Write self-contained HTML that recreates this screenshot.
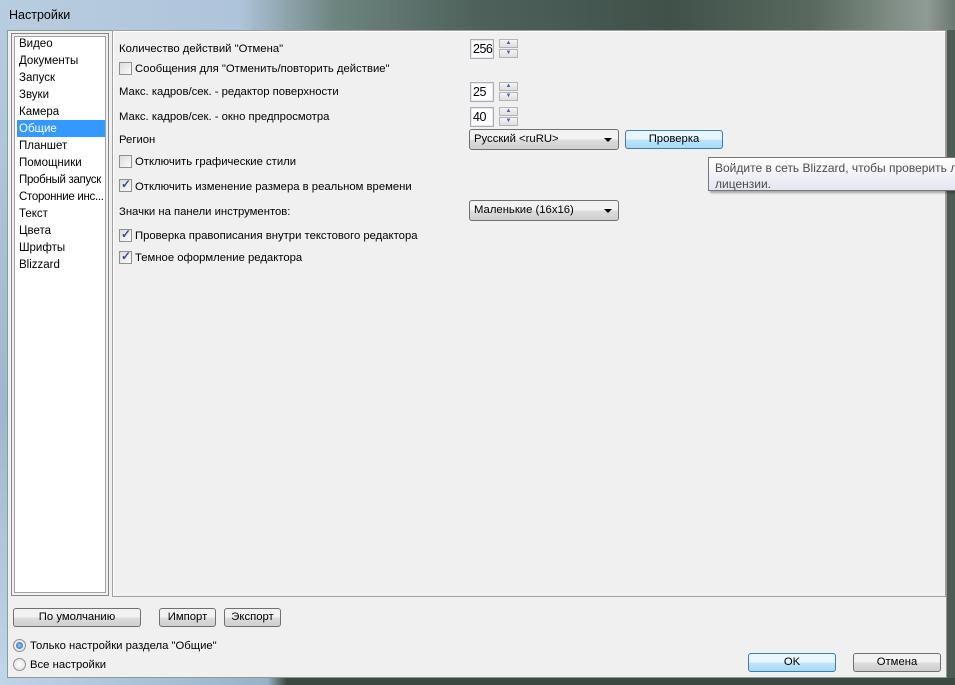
<!DOCTYPE html>
<html><head><meta charset="utf-8"><style>
*{box-sizing:border-box;margin:0;padding:0}
body{width:955px;height:685px;overflow:hidden;font-family:"Liberation Sans",sans-serif;font-size:11px;color:#000;background:#4a5a55;position:relative}
.a{position:absolute}
#title{left:0;top:0;width:955px;height:31px;background:linear-gradient(90deg,#b9cde0 0%,#aec4da 25%,#6e8580 35%,#4e615b 50%,#3f5149 70%,#59695f 85%,#8f9c95 97%,#6b7770 100%)}
#title span{position:absolute;left:9px;top:8px;font-size:12.5px;color:#000}
#lb{left:0;top:0;width:7px;height:685px;background:linear-gradient(180deg,#b9cde0,#9fb6cc 60%,#c2d6ea)}
#rb{left:947px;top:30px;width:8px;height:655px;background:#4e5c56}
#bb{left:0;top:678px;width:955px;height:7px;background:linear-gradient(90deg,#c0d4e8,#9ab2c8 28%,#3c4942 30%,#3c4942)}
#client{left:7px;top:30px;width:940px;height:648px;background:#f0f0f0;border:1px solid #8a9a94}
#list{left:11px;top:33px;width:98px;height:563px;background:#fff;border:1px solid #828790;box-shadow:inset 0 0 0 2px #f0f0f0,inset 0 0 0 3px #a0a0a0}
.it{position:absolute;left:19px;font-size:11.5px;line-height:17px;white-space:nowrap}
#sel{left:17px;top:120px;width:88px;height:17px;background:#3399ff}
#panel{left:112px;top:30px;width:834px;height:567px;border:1px solid #a0a0a0;box-shadow:inset 1px 1px 0 #fff}
.lbl{position:absolute;left:119px;line-height:14px;font-size:11.3px;white-space:nowrap}
.cb{position:absolute;width:13px;height:13px;border:1px solid #8e8f8f;background:linear-gradient(135deg,#dcdcdc,#fbfbfb)}
.cb.c::after{content:"✓";position:absolute;left:1px;top:-3px;font-size:12px;color:#3b4d87;font-weight:bold}
.num{position:absolute;left:470px;width:24px;height:20px;background:#fff;border:1px solid #abadb3;font-size:12.5px;padding:2px 0 0 2px;box-shadow:inset 0 0 0 1px #e3e9ef;letter-spacing:-0.5px}
.sp{position:absolute;left:499px;width:19px;height:9px;border:1px solid #b4b4b4;background:linear-gradient(#f4f4f4,#dedede);font-size:6px;color:#4c60a8;text-align:center;line-height:7px}
.dd{position:absolute;left:469px;width:150px;height:21px;border:1px solid #707070;border-radius:3px;background:linear-gradient(#f2f2f2 50%,#dddddd 50%,#cfcfcf);padding:3px 0 0 4px;font-size:11.3px}
.dd::after{content:"";position:absolute;right:6px;top:8px;border:4px solid transparent;border-top:4px solid #000;border-bottom:0}
.btn{position:absolute;height:19px;border:1px solid #707070;border-radius:3px;background:linear-gradient(#f2f2f2 50%,#dddddd 50%,#cfcfcf);text-align:center;line-height:17px;font-size:11.3px}
.btn.h{border-color:#3c7fb1;background:linear-gradient(#eaf6fd 50%,#bee6fd 50%,#a7d9f5)}
#tip{left:708px;top:157px;width:260px;height:34px;border:1px solid #767676;background:linear-gradient(#fff,#e4e5f0);box-shadow:2px 2px 2px rgba(0,0,0,.3);padding:2px 0 0 6px;line-height:16px;color:#4c4c4c;white-space:nowrap;font-size:12px}
.rad{position:absolute;width:13px;height:13px;border-radius:50%;border:1px solid #8e8f8f;background:radial-gradient(#fff,#dcdcdc)}
.rad.on::after{content:"";position:absolute;left:2px;top:2px;width:7px;height:7px;border-radius:50%;background:radial-gradient(#8bd2f5,#1e5e9a)}
</style></head><body>
<div id="title" class="a"><span>Настройки</span></div>
<div id="lb" class="a"></div>
<div id="rb" class="a"></div>
<div id="bb" class="a"></div>
<div id="client" class="a"></div>
<div id="list" class="a"></div>
<div id="sel" class="a"></div>
<div class="it" style="top:36px">Видео</div>
<div class="it" style="top:53px">Документы</div>
<div class="it" style="top:70px">Запуск</div>
<div class="it" style="top:87px">Звуки</div>
<div class="it" style="top:104px">Камера</div>
<div class="it" style="top:121px;color:#fff">Общие</div>
<div class="it" style="top:138px">Планшет</div>
<div class="it" style="top:155px">Помощники</div>
<div class="it" style="top:172px;letter-spacing:-0.3px">Пробный запуск</div>
<div class="it" style="top:189px;letter-spacing:-0.3px">Сторонние инс...</div>
<div class="it" style="top:206px">Текст</div>
<div class="it" style="top:223px">Цвета</div>
<div class="it" style="top:240px">Шрифты</div>
<div class="it" style="top:257px">Blizzard</div>
<div id="panel" class="a"></div>

<div class="lbl" style="top:42px">Количество действий "Отмена"</div>
<div class="num" style="top:39px">256</div>
<div class="sp" style="top:39px">▲</div><div class="sp" style="top:49px">▼</div>

<div class="cb" style="left:119px;top:62px"></div><div class="lbl" style="left:135px;top:62px">Сообщения для "Отменить/повторить действие"</div>

<div class="lbl" style="top:85px">Макс. кадров/сек. - редактор поверхности</div>
<div class="num" style="top:82px">25</div>
<div class="sp" style="top:82px">▲</div><div class="sp" style="top:92px">▼</div>

<div class="lbl" style="top:110px">Макс. кадров/сек. - окно предпросмотра</div>
<div class="num" style="top:107px">40</div>
<div class="sp" style="top:107px">▲</div><div class="sp" style="top:117px">▼</div>

<div class="lbl" style="top:133px">Регион</div>
<div class="dd" style="top:129px">Русский &lt;ruRU&gt;</div>
<div class="btn h" style="left:625px;top:130px;width:98px">Проверка</div>

<div class="cb" style="left:119px;top:155px"></div><div class="lbl" style="left:135px;top:155px">Отключить графические стили</div>
<div class="cb c" style="left:119px;top:179px"></div><div class="lbl" style="left:135px;top:180px">Отключить изменение размера в реальном времени</div>
<div class="lbl" style="top:205px">Значки на панели инструментов:</div>
<div class="dd" style="top:200px">Маленькие (16x16)</div>
<div class="cb c" style="left:119px;top:229px"></div><div class="lbl" style="left:135px;top:229px">Проверка правописания внутри текстового редактора</div>
<div class="cb c" style="left:119px;top:251px"></div><div class="lbl" style="left:135px;top:251px">Темное оформление редактора</div>

<div id="tip" class="a">Войдите в сеть Blizzard, чтобы проверить ло<br>лицензии.</div>

<div class="btn" style="left:13px;top:608px;width:128px">По умолчанию</div>
<div class="btn" style="left:159px;top:608px;width:57px">Импорт</div>
<div class="btn" style="left:224px;top:608px;width:57px">Экспорт</div>
<div class="rad on" style="left:13px;top:639px"></div><div class="lbl" style="left:30px;top:639px">Только настройки раздела "Общие"</div>
<div class="rad" style="left:13px;top:658px"></div><div class="lbl" style="left:30px;top:658px">Все настройки</div>
<div class="btn h" style="left:748px;top:653px;width:88px">OK</div>
<div class="btn" style="left:853px;top:653px;width:88px">Отмена</div>
</body></html>
